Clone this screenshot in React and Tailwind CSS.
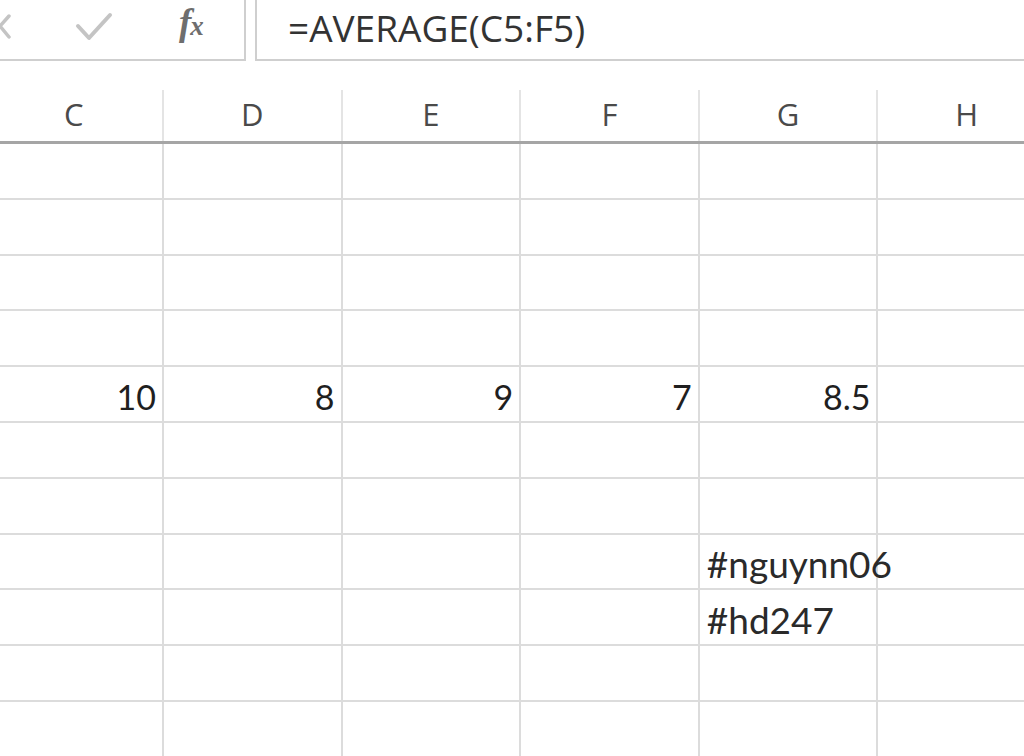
import React from "react";

const cols = ["C", "D", "E", "F", "G", "H"];
const rowCount = 11;

const data = {
  4: { C: "10", D: "8", E: "9", F: "7", G: "8.5" },
};
const tags = {
  7: "#nguynn06",
  8: "#hd247",
};

export default function App() {
  return (
    <div className="relative w-[1024px] h-[756px] overflow-hidden bg-white">
      {/* Formula bar */}
      <div className="flex h-[61px] gap-[9px]">
        <div className="relative w-[246px] shrink-0 border-r-2 border-b-2 border-[#cfcfcf] bg-white">
          <svg className="absolute left-0 top-0" width="246" height="59" viewBox="0 0 246 59">
            <path d="M9 16 L0 26 L9 37" fill="none" stroke="#c4c4c4" strokeWidth="3.5" strokeLinecap="round" strokeLinejoin="round" />
            <path d="M78 26 L89 38 L110 15" fill="none" stroke="#c4c4c4" strokeWidth="4" strokeLinecap="round" strokeLinejoin="round" />
          </svg>
          <div className="absolute left-[179px] top-[4px] flex items-baseline text-[#6e6e6e] italic font-bold" style={{ fontFamily: '"Liberation Serif", serif' }}>
            <span className="text-[37px] leading-none">f</span>
            <span className="text-[27px] leading-none -ml-[1px]">x</span>
          </div>
        </div>
        <div className="flex-1 border-l-2 border-b-2 border-[#cfcfcf] flex items-center pl-[31px] pb-[4px]">
          <span className="text-[37px] leading-none text-[#333333]" style={{ fontFamily: '"Open Sans", sans-serif' }}>
            =AVERAGE(C5:F5)
          </span>
        </div>
      </div>

      {/* Spacer */}
      <div className="h-[29px]" />

      {/* Column headers */}
      <div className="flex ml-[-14.6px] h-[54px] border-b-[3px] border-[#a5a5a5]">
        {cols.map((c) => (
          <div
            key={c}
            className="w-[178.6px] shrink-0 border-r-2 border-[#e4e4e4] flex items-center justify-center pb-[2px] text-[31px] text-[#4a4a4a]"
            style={{ fontFamily: '"Open Sans", sans-serif' }}
          >
            {c}
          </div>
        ))}
      </div>

      {/* Grid */}
      <div className="flex flex-col ml-[-14.6px]">
        {Array.from({ length: rowCount }).map((_, r) => (
          <div key={r} className="flex h-[55.8px] shrink-0 border-b-2 border-[#dcdcdc]">
            {cols.map((c) => {
              const v = data[r] && data[r][c];
              const tag = c === "G" ? tags[r] : null;
              return (
                <div
                  key={c}
                  className={`relative w-[178.6px] shrink-0 border-r-2 border-[#dcdcdc] flex items-end pb-[2px] text-[#1f1f1f] ${v ? "justify-end pr-[6px]" : "justify-start pl-[7px]"}`}
                  style={{ fontFamily: 'Lato, "Open Sans", sans-serif' }}
                >
                  {v && <span className="text-[34px] leading-[44px]">{v}</span>}
                  {tag && <span className="text-[37px] leading-[44px] whitespace-nowrap text-[#2a2a2a]">{tag}</span>}
                </div>
              );
            })}
          </div>
        ))}
      </div>
    </div>
  );
}
